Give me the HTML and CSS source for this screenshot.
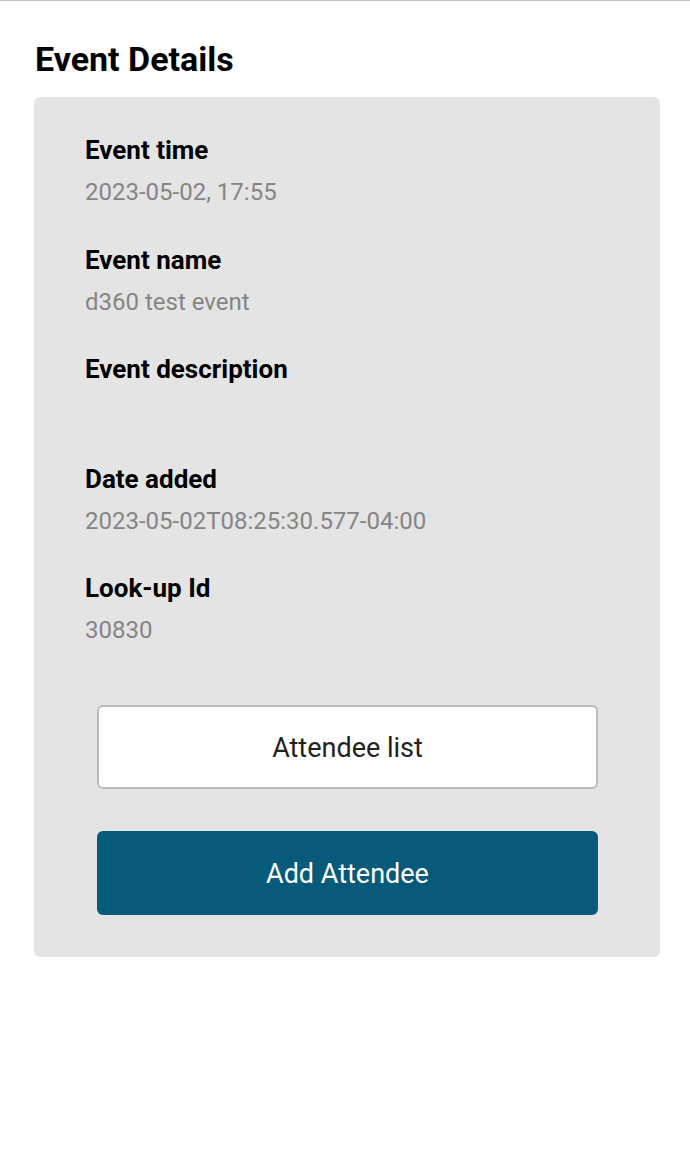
FILE: index.html
```html
<!DOCTYPE html>
<html>
<head>
<meta charset="utf-8">
<link rel="stylesheet" href="styles.css">
</head>
<body>
<div class="topline"></div>
<main class="page">
  <h1 class="title">Event Details</h1>
  <section class="card">
    <div class="fields">
      <div class="field">
        <div class="label">Event time</div>
        <div class="value">2023-05-02, 17:55</div>
      </div>
      <div class="field">
        <div class="label">Event name</div>
        <div class="value">d360 test event</div>
      </div>
      <div class="field">
        <div class="label">Event description</div>
        <div class="value"></div>
      </div>
      <div class="field">
        <div class="label">Date added</div>
        <div class="value">2023-05-02T08:25:30.577-04:00</div>
      </div>
      <div class="field">
        <div class="label">Look-up Id</div>
        <div class="value">30830</div>
      </div>
    </div>
    <div class="actions">
      <button class="btn btn-outline">Attendee list</button>
      <button class="btn btn-primary">Add Attendee</button>
    </div>
  </section>
</main>
</body>
</html>
```
FILE: styles.css
```css
* { box-sizing: border-box; }
html, body {
  margin: 0;
  padding: 0;
  background: #ffffff;
  font-family: Roboto, "Liberation Sans", sans-serif;
}
.topline {
  height: 1px;
  background: #bdbdbd;
}
.page {
  padding: 40px 30px 0 34px;
}
.title {
  margin: 0 0 20px 1px;
  font-size: 34px;
  line-height: 36px;
  font-weight: 700;
  color: #000;
}
.card {
  background: #e4e4e4;
  border-radius: 6px;
  padding: 38px 62px 42px 51px;
}
.fields {
  display: flex;
  flex-direction: column;
  gap: 37.5px;
}
.field {
  display: flex;
  flex-direction: column;
}
.label {
  font-size: 26px;
  line-height: 30px;
  font-weight: 700;
  color: #000;
}
.value {
  margin-top: 12px;
  font-size: 24px;
  line-height: 30px;
  height: 30px;
  color: #858585;
}
.actions {
  margin-top: 60px;
  margin-left: 12px;
  display: flex;
  flex-direction: column;
  gap: 42px;
}
.btn {
  display: block;
  width: 100%;
  height: 84px;
  padding: 2px 0 0;
  border-radius: 6px;
  font-family: Roboto, "Liberation Sans", sans-serif;
  font-size: 27px;
  cursor: pointer;
}
.btn-outline {
  background: #ffffff;
  border: 2px solid #bcbcbc;
  color: #222;
}
.btn-primary {
  background: #085a7b;
  border: none;
  color: #ffffff;
}
```
